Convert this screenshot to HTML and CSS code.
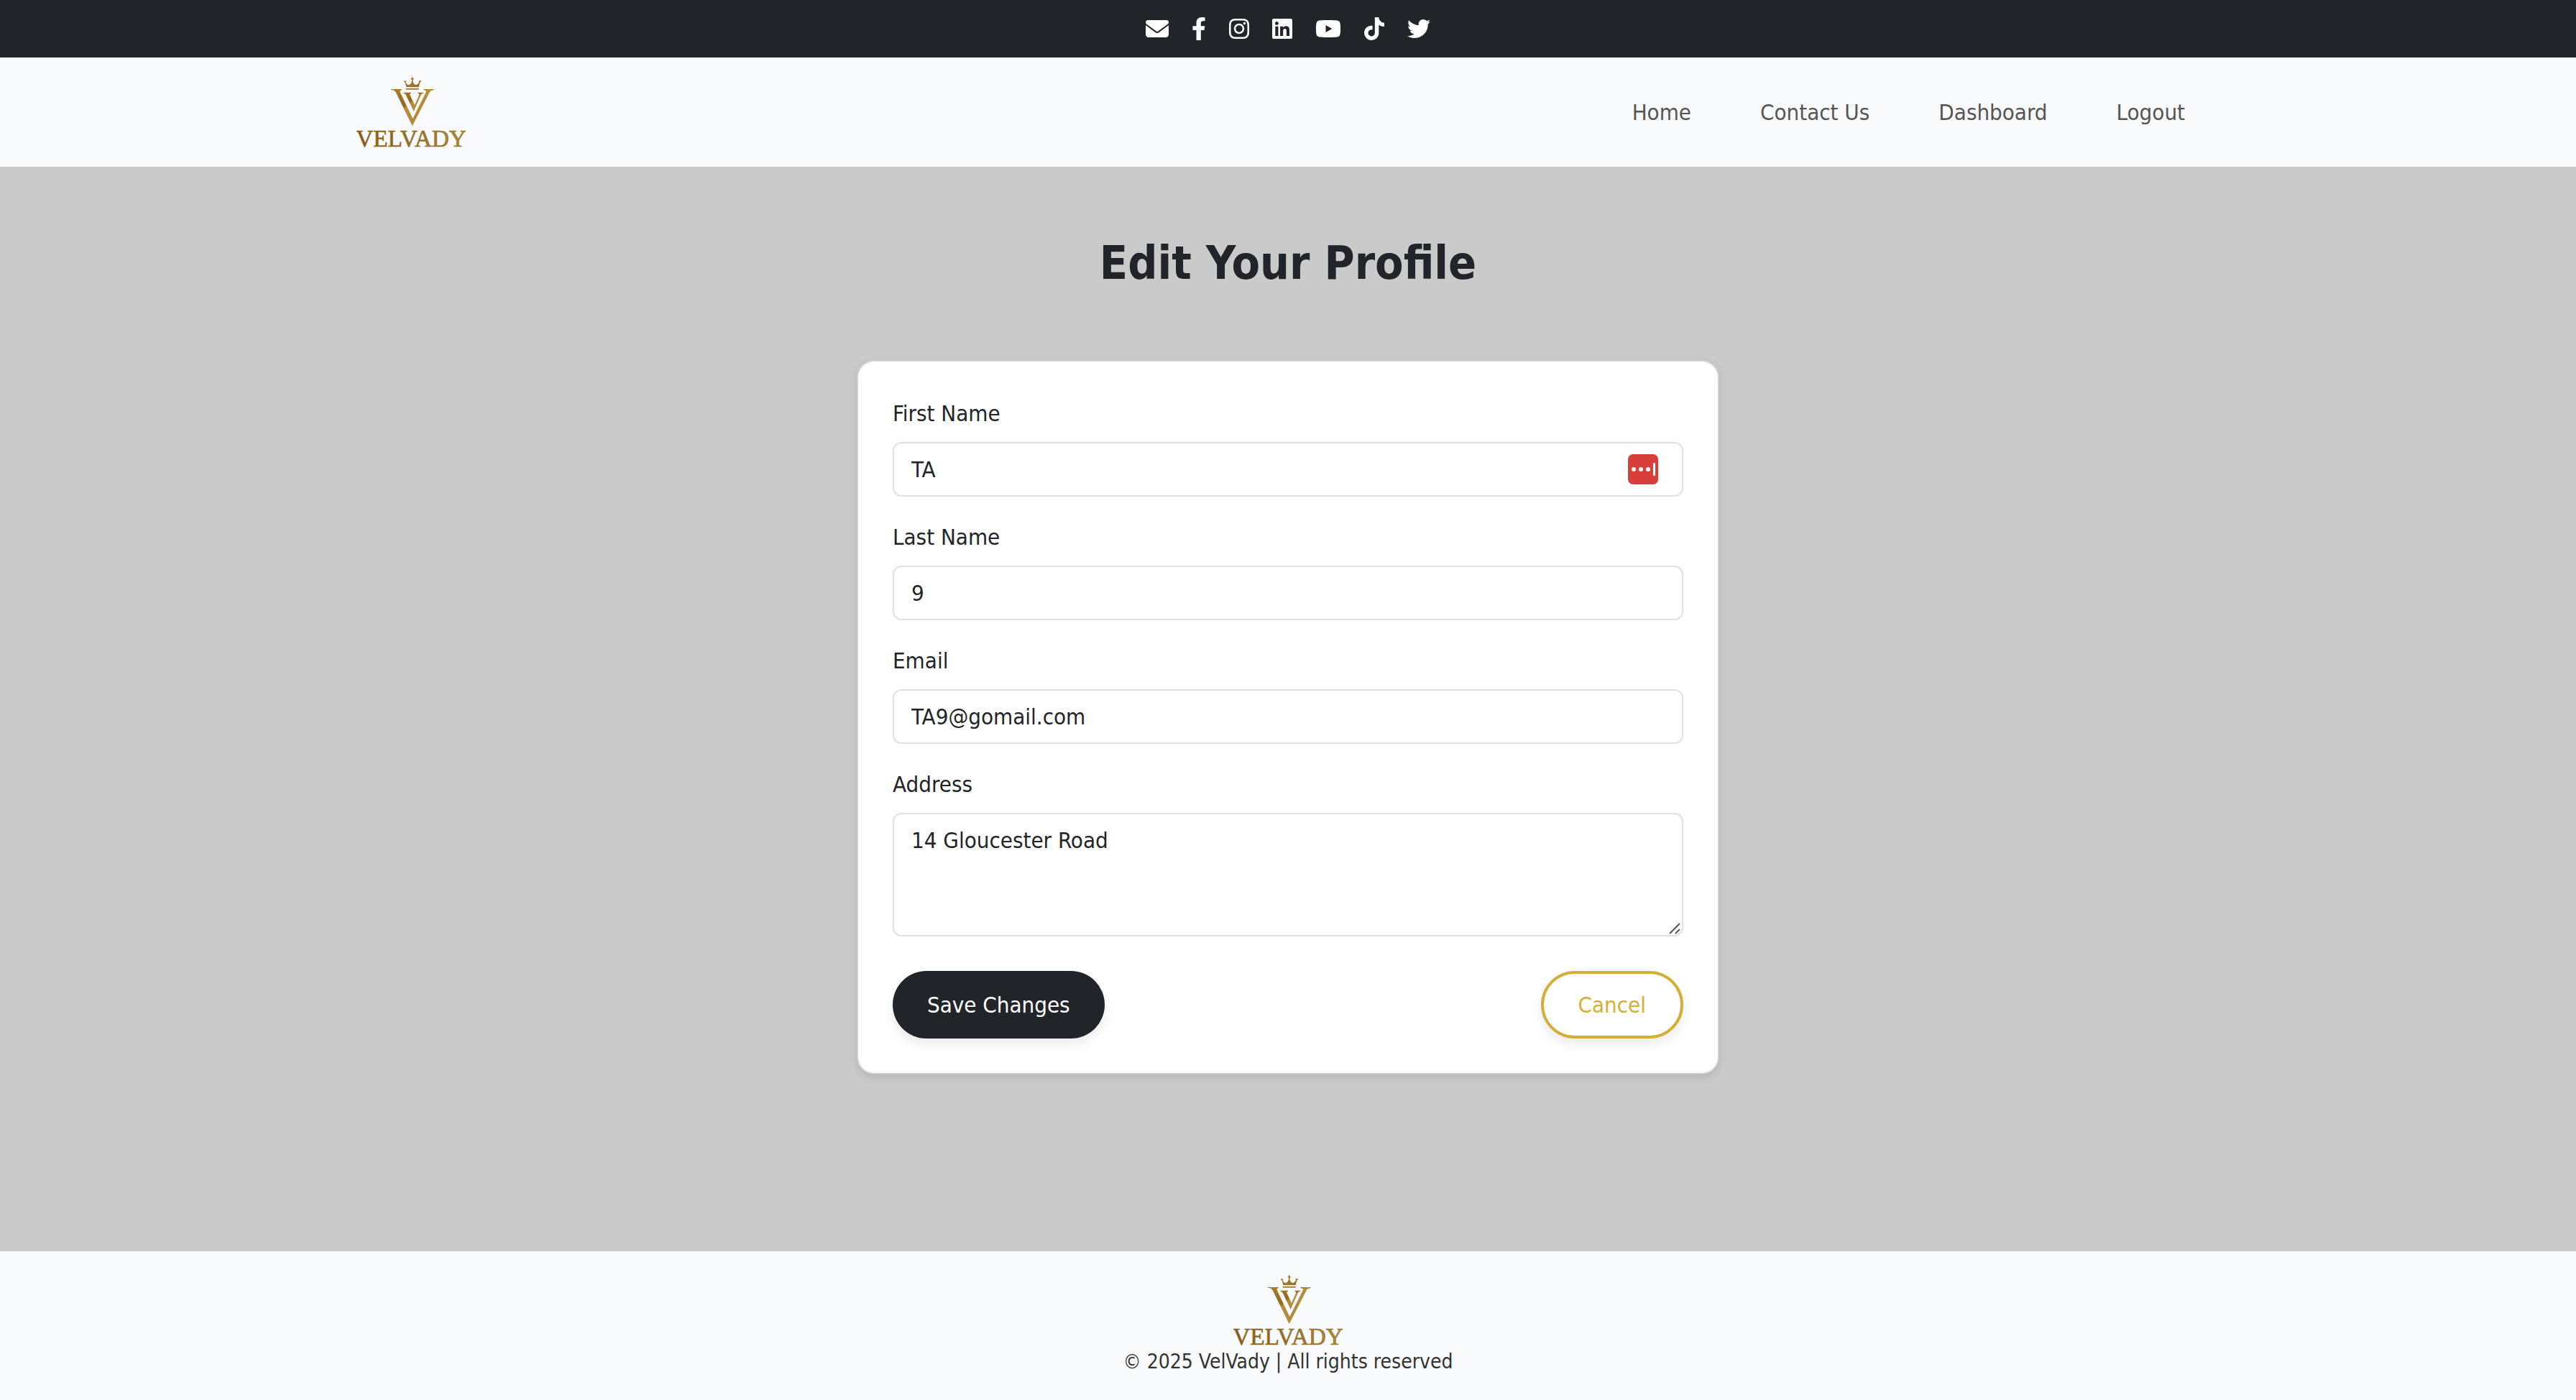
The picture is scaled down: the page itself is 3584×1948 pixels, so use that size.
FILE: index.html
```html
<!DOCTYPE html>
<html lang="en">
<head>
<meta charset="utf-8">
<meta name="viewport" content="width=device-width, initial-scale=1">
<title>Edit Your Profile | VelVady</title>
<link rel="stylesheet" href="styles.css">
</head>
<body>
<svg class="defs" width="0" height="0" aria-hidden="true">
  <defs>
    <linearGradient id="gold" gradientUnits="userSpaceOnUse" x1="230" y1="60" x2="380" y2="240">
      <stop offset="0" stop-color="#b08a35"/>
      <stop offset="0.5" stop-color="#92691f"/>
      <stop offset="0.55" stop-color="#b58e3c"/>
      <stop offset="1" stop-color="#b08a3a"/>
    </linearGradient>
    <linearGradient id="gold-text" gradientUnits="userSpaceOnUse" x1="78" y1="345" x2="534" y2="275">
      <stop offset="0" stop-color="#7d581a"/>
      <stop offset="0.5" stop-color="#94702a"/>
      <stop offset="1" stop-color="#b08c3c"/>
    </linearGradient>
    <symbol id="logo" viewBox="78 50 456 300">
      <g fill="url(#gold)">
        <path d="M222 104H266V108C259 109 258 112 261 119L313 227L366 121C371 111 369 109 359 108V104H401V108C390 109 386 112 381 121L311 258L243 119C238 110 234 108 222 107Z"/>
        <path d="M274 118H306V121C300 122 300 125 302 130L321 170L338 131C341 124 340 122 334 121V118H358V121C352 122 349 125 346 131L317 197L285 130C282 124 280 122 274 121Z"/>
        <path d="M284 101H338V106H284Z"/>
        <path d="M286 96L281 77L274 70L286 69L284 74C286 82 290 86 296 86C303 86 308 80 309 66L303 61L308 59L311 51L314 59L319 61L313 66C314 80 319 86 326 86C332 86 336 82 339 74L337 69L350 69L343 76L338 96Z"/>
      </g>
      <text class="logo-text" x="306" y="344" text-anchor="middle" fill="url(#gold-text)">VELVADY</text>
    </symbol>
  </defs>
</svg>

<div class="topbar">
  <a href="#" aria-label="Email"><svg class="icon" viewBox="0 0 512 512"><path d="M48 64C21.5 64 0 85.5 0 112c0 15.1 7.1 29.3 19.2 38.4L236.8 313.6c11.4 8.5 27 8.5 38.4 0L492.8 150.4c12.1-9.1 19.2-23.3 19.2-38.4c0-26.5-21.5-48-48-48H48zM0 176V384c0 35.3 28.7 64 64 64H448c35.3 0 64-28.7 64-64V176L294.4 339.2c-22.8 17.1-54 17.1-76.8 0L0 176z"/></svg></a>
  <a href="#" aria-label="Facebook"><svg class="icon" viewBox="0 0 320 512"><path d="M279.14 288l14.22-92.66h-88.91v-60.13c0-25.35 12.42-50.06 52.24-50.06h40.42V6.26S260.43 0 225.36 0c-73.22 0-121.08 44.38-121.08 124.72v70.62H22.89V288h81.39v224h100.17V288z"/></svg></a>
  <a href="#" aria-label="Instagram"><svg class="icon" viewBox="0 0 448 512"><path d="M224.1 141c-63.6 0-114.9 51.3-114.9 114.9s51.3 114.9 114.9 114.9S339 319.5 339 255.9 287.7 141 224.1 141zm0 189.6c-41.1 0-74.7-33.5-74.7-74.7s33.5-74.7 74.7-74.7 74.7 33.5 74.7 74.7-33.6 74.7-74.7 74.7zm146.4-194.3c0 14.9-12 26.8-26.8 26.8-14.9 0-26.8-12-26.8-26.8s12-26.8 26.8-26.8 26.8 12 26.8 26.8zm76.1 27.2c-1.7-35.9-9.9-67.7-36.2-93.9-26.2-26.2-58-34.4-93.9-36.2-37-2.1-147.9-2.1-184.9 0-35.8 1.7-67.6 9.9-93.9 36.1s-34.4 58-36.2 93.9c-2.1 37-2.1 147.9 0 184.9 1.7 35.9 9.9 67.7 36.2 93.9s58 34.4 93.9 36.2c37 2.1 147.9 2.1 184.9 0 35.9-1.7 67.7-9.9 93.9-36.2 26.2-26.2 34.4-58 36.2-93.9 2.1-37 2.1-147.8 0-184.8zM398.8 388c-7.8 19.6-22.9 34.7-42.6 42.6-29.5 11.7-99.5 9-132.1 9s-102.7 2.6-132.1-9c-19.6-7.8-34.7-22.9-42.6-42.6-11.7-29.5-9-99.5-9-132.1s-2.6-102.7 9-132.1c7.8-19.6 22.9-34.7 42.6-42.6 29.5-11.7 99.5-9 132.1-9s102.7-2.6 132.1 9c19.6 7.8 34.7 22.9 42.6 42.6 11.7 29.5 9 99.5 9 132.1s2.7 102.7-9 132.1z"/></svg></a>
  <a href="#" aria-label="LinkedIn"><svg class="icon" viewBox="0 0 448 512"><path d="M416 32H31.9C14.3 32 0 46.5 0 64.3v383.4C0 465.5 14.3 480 31.9 480H416c17.6 0 32-14.5 32-32.3V64.3c0-17.8-14.4-32.3-32-32.3zM135.4 416H69V202.2h66.5V416zm-33.2-243c-21.3 0-38.5-17.3-38.5-38.5S80.9 96 102.2 96c21.2 0 38.5 17.3 38.5 38.5 0 21.3-17.2 38.5-38.5 38.5zm282.1 243h-66.4V312c0-24.8-.5-56.7-34.5-56.7-34.6 0-39.9 27-39.9 54.9V416h-66.4V202.2h63.7v29.2h.9c8.9-16.8 30.6-34.5 62.9-34.5 67.2 0 79.7 44.3 79.7 101.9V416z"/></svg></a>
  <a href="#" aria-label="YouTube"><svg class="icon" viewBox="0 0 576 512"><path d="M549.655 124.083c-6.281-23.65-24.787-42.276-48.284-48.597C458.781 64 288 64 288 64S117.22 64 74.629 75.486c-23.497 6.322-42.003 24.947-48.284 48.597-11.412 42.867-11.412 132.305-11.412 132.305s0 89.438 11.412 132.305c6.281 23.65 24.787 41.5 48.284 47.821C117.22 448 288 448 288 448s170.78 0 213.371-11.486c23.497-6.321 42.003-24.171 48.284-47.821 11.412-42.867 11.412-132.305 11.412-132.305s0-89.438-11.412-132.305zm-317.51 213.508V175.185l142.739 81.205-142.739 81.201z"/></svg></a>
  <a href="#" aria-label="TikTok"><svg class="icon" viewBox="0 0 448 512"><path d="M448,209.91a210.06,210.06,0,0,1-122.77-39.25V349.38A162.55,162.55,0,1,1,185,188.31V278.2a74.62,74.62,0,1,0,52.23,71.18V0l88,0a121.18,121.18,0,0,0,1.86,22.17h0A122.18,122.18,0,0,0,381,102.39a121.43,121.43,0,0,0,67,20.14Z"/></svg></a>
  <a href="#" aria-label="Twitter"><svg class="icon" viewBox="0 0 512 512"><path d="M459.37 151.716c.325 4.548.325 9.097.325 13.645 0 138.72-105.583 298.558-298.558 298.558-59.452 0-114.68-17.219-161.137-47.106 8.447.974 16.568 1.299 25.34 1.299 49.055 0 94.213-16.568 130.274-44.832-46.132-.975-84.792-31.188-98.112-72.772 6.498.974 12.995 1.624 19.818 1.624 9.421 0 18.843-1.3 27.614-3.573-48.081-9.747-84.143-51.98-84.143-102.985v-1.299c13.969 7.797 30.214 12.67 47.431 13.319-28.264-18.843-46.781-51.005-46.781-87.391 0-19.492 5.197-37.36 14.294-52.954 51.655 63.675 129.3 105.258 216.365 109.807-1.624-7.797-2.599-15.918-2.599-24.04 0-57.828 46.782-104.934 104.934-104.934 30.213 0 57.502 12.67 76.67 33.137 23.715-4.548 46.456-13.32 66.599-25.34-7.798 24.366-24.366 44.833-46.132 57.827 21.117-2.273 41.584-8.122 60.426-16.243-14.292 20.791-32.161 39.308-52.628 54.253z"/></svg></a>
</div>

<header class="header">
  <div class="container">
    <a href="#" class="brand" aria-label="VelVady"><svg class="logo"><use href="#logo"/></svg></a>
    <nav class="nav">
      <a href="#">Home</a>
      <a href="#">Contact Us</a>
      <a href="#">Dashboard</a>
      <a href="#">Logout</a>
    </nav>
  </div>
</header>

<main class="main">
  <h1 class="title">Edit Your Profile</h1>
  <form class="card">
    <div class="field">
      <label for="first-name">First Name</label>
      <div class="control">
        <input id="first-name" type="text" value="TA">
        <svg class="autofill" viewBox="0 0 42 42" aria-hidden="true">
          <rect width="42" height="42" rx="7" fill="#d83f3b"/>
          <g fill="#fff"><circle cx="8" cy="21" r="3"/><circle cx="18" cy="21" r="3"/><circle cx="28" cy="21" r="3"/><rect x="35" y="12" width="3" height="18" rx="1"/></g>
        </svg>
      </div>
    </div>
    <div class="field">
      <label for="last-name">Last Name</label>
      <input id="last-name" type="text" value="9">
    </div>
    <div class="field">
      <label for="email">Email</label>
      <input id="email" type="email" value="TA9@gomail.com">
    </div>
    <div class="field">
      <label for="address">Address</label>
      <div class="control">
        <textarea id="address" rows="3">14 Gloucester Road</textarea>
        <svg class="grip" viewBox="0 0 16 16" aria-hidden="true"><path d="M1 15L15 1M9 15L15 9"/></svg>
      </div>
    </div>
    <div class="actions">
      <button type="submit" class="btn btn-dark">Save Changes</button>
      <button type="button" class="btn btn-gold">Cancel</button>
    </div>
  </form>
</main>

<footer class="footer">
  <svg class="logo" role="img" aria-label="VelVady"><use href="#logo"/></svg>
  <p>© 2025 VelVady | All rights reserved</p>
</footer>
</body>
</html>
```
FILE: styles.css
```css
*,
*::before,
*::after {
  box-sizing: border-box;
}

body {
  margin: 0;
  min-height: 100vh;
  display: flex;
  flex-direction: column;
  font-family: "DejaVu Sans Condensed", Tahoma, "DejaVu Sans", sans-serif;
  font-size: 31px;
  line-height: 48px;
  color: #212529;
  background: #cacaca;
}

a {
  color: inherit;
  text-decoration: none;
}

.defs {
  position: absolute;
}

.topbar {
  display: flex;
  justify-content: center;
  align-items: center;
  gap: 32px;
  padding: 24px;
  background: #212529;
  color: #fff;
}

.topbar a {
  display: flex;
}

.icon {
  display: block;
  height: 32px;
  fill: currentColor;
}

.header {
  background: #f8fafc;
}

.container {
  display: flex;
  justify-content: space-between;
  align-items: center;
  max-width: 2640px;
  margin: 0 auto;
  padding: 26px 24px;
}

.brand {
  display: flex;
}

.logo {
  display: block;
  width: 152px;
  height: 100px;
}

.logo-text {
  font-family: "Liberation Serif", "Times New Roman", serif;
  font-size: 100px;
  stroke: #94702a;
  stroke-width: 2px;
}

.nav {
  display: flex;
  color: #555;
}

.nav a {
  padding: 0 48px;
}

.main {
  flex: 1;
  padding: 96px 24px;
}

.title {
  margin: 0 0 96px;
  font-size: 64px;
  line-height: 77px;
  font-weight: 700;
  text-align: center;
}

.card {
  display: flex;
  flex-direction: column;
  gap: 32px;
  max-width: 1200px;
  margin: 0 auto;
  padding: 48px;
  background: #fff;
  background-clip: padding-box;
  border: 2px solid rgba(255, 255, 255, 0.2);
  border-radius: 24px;
  box-shadow: 0 4px 12px rgba(0, 0, 0, 0.1);
}

.field {
  display: flex;
  flex-direction: column;
  gap: 16px;
}

.control {
  position: relative;
}

input,
textarea {
  display: block;
  width: 100%;
  margin: 0;
  padding: 12px 24px;
  border: 2px solid #dee2e6;
  border-radius: 12px;
  background: #fff;
  color: inherit;
  font: inherit;
  resize: none;
}

input {
  height: 76px;
}

.autofill {
  position: absolute;
  top: 17px;
  right: 35px;
  width: 42px;
  height: 42px;
}

.grip {
  position: absolute;
  right: 4px;
  bottom: 3px;
  width: 16px;
  height: 16px;
  fill: none;
  stroke: #555;
  stroke-width: 2;
}

.actions {
  display: flex;
  justify-content: space-between;
  padding-top: 16px;
}

.btn {
  padding: 23px 48px;
  border: 0;
  border-radius: 48px;
  font: inherit;
  cursor: pointer;
  box-shadow: 0 8px 16px rgba(0, 0, 0, 0.08);
}

.btn-dark {
  color: #fff;
  background: #212529;
}

.btn-gold {
  padding: 19px 48px;
  border: 4px solid #d4af37;
  color: #d4af37;
  background: #fff;
}

.footer {
  display: flex;
  flex-direction: column;
  align-items: center;
  padding: 32px;
  background: #f8fafc;
  color: #333;
}

.footer p {
  margin: 0;
  font-size: 28px;
  line-height: 43px;
}
```
